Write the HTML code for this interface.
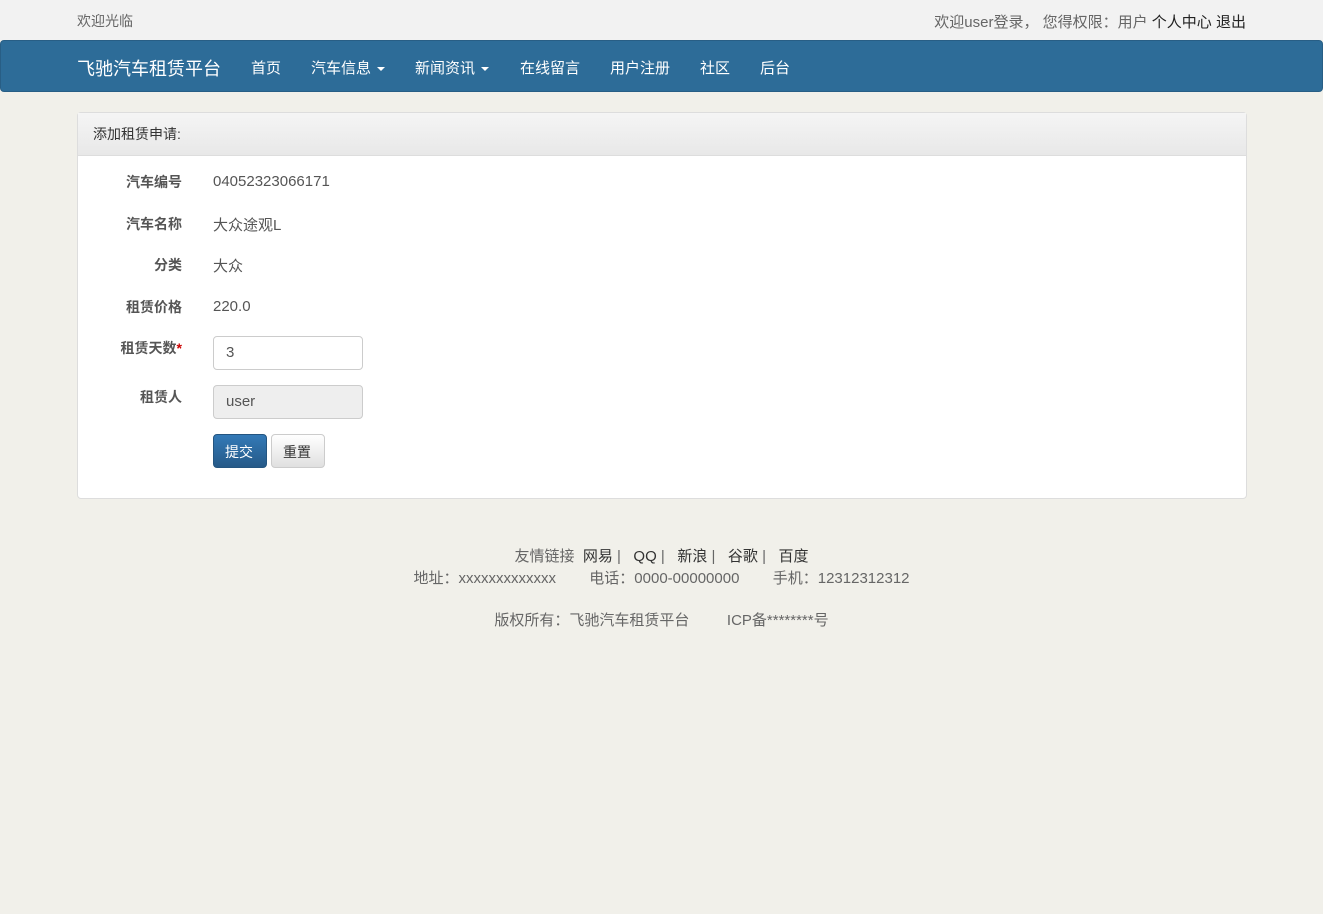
<!DOCTYPE html>
<html><head><meta charset="utf-8"><style>
*{box-sizing:border-box}
body{margin:0;background:#f1f0ea;font-family:"Liberation Sans","Noto Sans CJK SC",sans-serif;font-size:15px;color:#555;width:1323px;height:914px;overflow:hidden;position:relative}
.abs{position:absolute;white-space:nowrap}
.top{position:absolute;left:0;top:0;width:1323px;height:40px;background:#f2f2f2}
.nav{position:absolute;left:0;top:40px;width:1323px;height:52px;background:#2d6c98;border-radius:4px;border:1px solid #285e85}
.nav span{position:absolute;top:16px;color:#fff;font-size:15px}
.caret{display:inline-block;border-top:4px solid #fff;border-left:4px solid transparent;border-right:4px solid transparent;vertical-align:middle;margin-left:6px}
.panel{position:absolute;left:77px;top:112px;width:1170px;height:387px;background:#fff;border:1px solid #ddd;border-radius:4px}
.ph{height:43px;background:linear-gradient(#f5f5f5,#e8e8e8);border-bottom:1px solid #ddd;padding:11px 15px;color:#333;font-size:14px}
.lbl{position:absolute;right:1064px;font-weight:bold;color:#555;font-size:14px}
.val{position:absolute;left:135px;color:#555}
.inp{position:absolute;left:135px;width:150px;height:34px;border:1px solid #ccc;border-radius:4px;padding:7px 12px}
.btn{position:absolute;top:321px;height:34px;border-radius:4px;padding:7px 11px;font-size:14px}
.foot{position:absolute;width:1323px;text-align:center;color:#666}
.foot b{font-weight:normal;color:#333}
</style></head><body>
<div class="top"><span class="abs" style="left:77px;top:11px;color:#666;font-size:14px">欢迎光临</span>
<span class="abs" style="right:77px;top:11px;color:#666">欢迎user登录， 您得权限：用户 <span style="color:#222">个人中心</span> <span style="color:#222">退出</span></span></div>
<div class="nav">
<span style="left:76px;top:14px;font-size:18px">飞驰汽车租赁平台</span>
<span style="left:250px">首页</span>
<span style="left:310px">汽车信息<i class="caret"></i></span>
<span style="left:414px">新闻资讯<i class="caret"></i></span>
<span style="left:519px">在线留言</span>
<span style="left:609px">用户注册</span>
<span style="left:699px">社区</span>
<span style="left:759px">后台</span>
</div>
<div class="panel"><div class="ph">添加租赁申请:</div>
<span class="lbl" style="top:59px">汽车编号</span><span class="val" style="top:60px">04052323066171</span>
<span class="lbl" style="top:101px">汽车名称</span><span class="val" style="top:101px">大众途观L</span>
<span class="lbl" style="top:142px">分类</span><span class="val" style="top:142px">大众</span>
<span class="lbl" style="top:184px">租赁价格</span><span class="val" style="top:185px">220.0</span>
<span class="lbl" style="top:225px;right:1064px">租赁天数<span style="color:#c00">*</span></span>
<div class="inp" style="top:223px">3</div>
<span class="lbl" style="top:274px">租赁人</span>
<div class="inp" style="top:272px;background:#eee">user</div>
<div class="btn" style="left:135px;width:54px;background:linear-gradient(#337ab7,#265a88);color:#fff;border:1px solid #245580">提交</div>
<div class="btn" style="left:193px;width:54px;background:linear-gradient(#fff,#e0e0e0);color:#333;border:1px solid #ccc">重置</div>
</div>
<div class="foot" style="top:545px">友情链接 &nbsp;<b>网易</b> | &nbsp; <b>QQ</b> | &nbsp; <b>新浪</b> | &nbsp; <b>谷歌</b> | &nbsp; <b>百度</b></div>
<div class="foot" style="top:567px">地址：xxxxxxxxxxxxx &nbsp; &nbsp; &nbsp; &nbsp;电话：0000-00000000 &nbsp; &nbsp; &nbsp; &nbsp;手机：12312312312</div>
<div class="foot" style="top:609px">版权所有：飞驰汽车租赁平台 &nbsp; &nbsp; &nbsp; &nbsp; ICP备********号</div>
</body></html>
